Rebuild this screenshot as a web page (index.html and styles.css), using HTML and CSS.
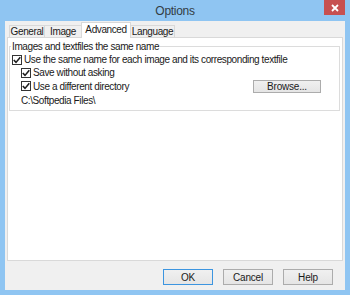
FILE: index.html
```html
<!DOCTYPE html>
<html lang="en">
<head>
    <meta charset="UTF-8">
    <meta name="viewport" content="width=device-width, initial-scale=1.0">
    <title>Options</title>
    <link rel="stylesheet" href="styles.css">
</head>
<body>
    <div id="window">
        <div id="titlebar">
            <span></span>
            <span id="title">Options</span>
            <span id="close">
                <svg width="8" height="8" viewBox="0 0 8 8"><path d="M1 1L7 7M7 1L1 7" stroke="#ffffff" stroke-width="1.8"/></svg>
            </span>
        </div>
        <div id="client">
            <div id="tabs">
                <div class="tab" id="tab-general">General</div>
                <div class="tab" id="tab-image">Image</div>
                <div class="tab selected" id="tab-advanced">Advanced</div>
                <div class="tab" id="tab-language">Language</div>
            </div>
            <div id="panel">
                <fieldset id="group">
                    <legend>Images and textfiles the same name</legend>
                    <div class="row" id="row-same">
                        <span class="check"><svg width="8" height="8" viewBox="0 0 8 8"><path d="M0.8 4L3 6.4L7.3 1.2" fill="none" stroke="#1e1e1e" stroke-width="1.6"/></svg></span>
                        <span>Use the same name for each image and its corresponding textfile</span>
                    </div>
                    <div class="row sub">
                        <span class="check"><svg width="8" height="8" viewBox="0 0 8 8"><path d="M0.8 4L3 6.4L7.3 1.2" fill="none" stroke="#1e1e1e" stroke-width="1.6"/></svg></span>
                        <span>Save without asking</span>
                    </div>
                    <div class="row sub" id="row-dir">
                        <span class="check"><svg width="8" height="8" viewBox="0 0 8 8"><path d="M0.8 4L3 6.4L7.3 1.2" fill="none" stroke="#1e1e1e" stroke-width="1.6"/></svg></span>
                        <span>Use a different directory</span>
                        <button class="btn" id="browse">Browse...</button>
                    </div>
                    <div class="row sub" id="path">C:\Softpedia Files\</div>
                </fieldset>
            </div>
            <div id="actions">
                <button class="btn default">OK</button>
                <button class="btn">Cancel</button>
                <button class="btn">Help</button>
            </div>
        </div>
    </div>
</body>
</html>
```

FILE: styles.css
```css
body{
    margin: 0;
    padding: 0;
    background-color: #8fc5f2;
}

#window{
    width: 350px;
    height: 295px;
    box-sizing: border-box;
    padding: 0 5px 5px;
    background-color: #8fc5f2;
    display: flex;
    flex-direction: column;
    font-family: "Liberation Sans", Arial, sans-serif;
    font-size: 10px;
    letter-spacing: -0.4px;
    color: #1a1a1a;
}

#titlebar{
    height: 21px;
    display: grid;
    grid-template-columns: 1fr auto 1fr;
    align-items: start;
}

#title{
    font-family: "Liberation Sans", Arial, sans-serif;
    font-size: 12px;
    letter-spacing: -0.3px;
    line-height: 22px;
    color: #333c44;
}

#close{
    justify-self: end;
    width: 21px;
    height: 15px;
    background-color: #c75050;
    display: flex;
    align-items: center;
    justify-content: center;
}

#client{
    flex: 1;
    background-color: #f0f0f0;
    padding: 1px 2px 0;
    display: flex;
    flex-direction: column;
}

#tabs{
    height: 15px;
    display: flex;
    align-items: flex-end;
    margin-left: 2px;
}

.tab{
    height: 12px;
    box-sizing: border-box;
    border: solid #d9d9d9 1px;
    border-bottom: none;
    background-color: #f0f0f0;
    line-height: 12px;
    text-align: center;
    margin-right: -1px;
}

.tab.selected{
    height: 16px;
    margin-bottom: -1px;
    background-color: #ffffff;
    line-height: 14px;
    position: relative;
}

#tab-general{ width: 36px; }
#tab-image{ width: 38px; }
#tab-advanced{ width: 50px; }
#tab-language{ width: 45px; }

#panel{
    flex: 1;
    background-color: #ffffff;
    border: solid #d9d9d9 1px;
    padding: 0;
}

#group{
    margin: 2px 2px 0 1px;
    padding: 0 0 3px;
    border: solid #dcdcdc 1px;
}

#group legend{
    margin-left: 1px;
    padding: 0 1px;
    line-height: 13px;
}

.row{
    height: 13px;
    display: flex;
    align-items: center;
    padding-left: 2px;
    white-space: nowrap;
}

.row.sub{
    padding-left: 11px;
}

#row-dir{
    height: 14px;
}

#path{
    height: 14px;
}

.check{
    width: 10px;
    height: 10px;
    box-sizing: border-box;
    border: solid #333333 1px;
    background-color: #ffffff;
    margin-right: 2px;
    display: flex;
    align-items: center;
    justify-content: center;
}

.btn{
    height: 16px;
    width: 50px;
    box-sizing: border-box;
    border: solid #acacac 1px;
    background: linear-gradient(#f0f0f0, #e5e5e5);
    font-family: "Liberation Sans", Arial, sans-serif;
    font-size: 10px;
    letter-spacing: -0.2px;
    color: #1a1a1a;
    padding: 0;
    line-height: 13px;
}

.btn.default{
    border-color: #3c95e0;
}

#browse{
    width: 68px;
    height: 13px;
    margin-left: auto;
    margin-right: 18px;
    line-height: 11px;
}

#actions{
    height: 29px;
    box-sizing: border-box;
    padding: 8px 10px 0 0;
    display: flex;
    justify-content: flex-end;
    align-items: flex-start;
    gap: 10px;
}
```
